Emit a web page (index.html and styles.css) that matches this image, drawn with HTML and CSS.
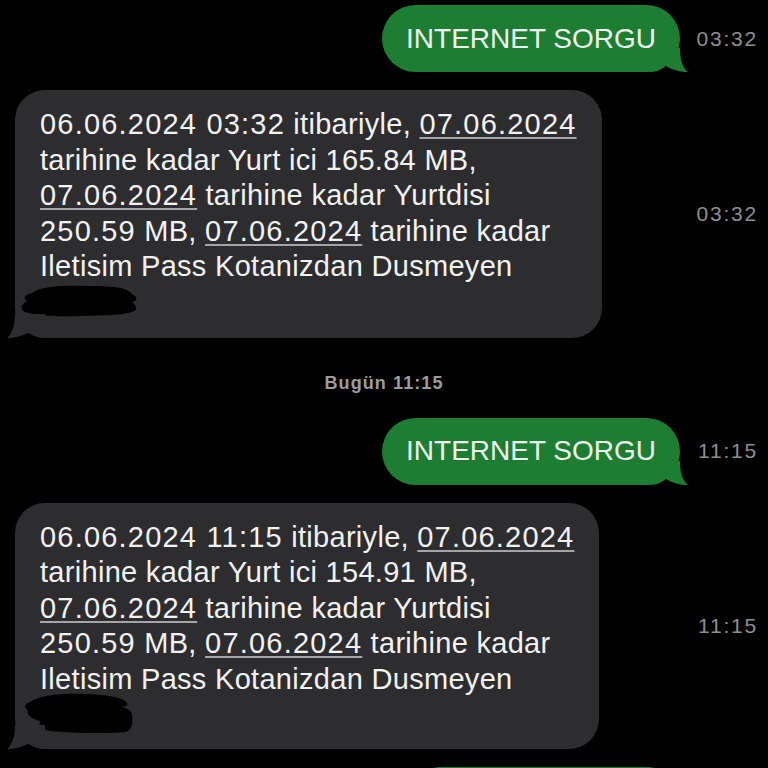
FILE: index.html
```html
<!DOCTYPE html>
<html lang="tr">
<head>
    <meta charset="UTF-8">
    <meta name="viewport" content="width=device-width, initial-scale=1.0">
    <title>Mesajlar</title>
    <link rel="stylesheet" href="styles.css">
</head>
<body>
    <div class="chat">
        <div class="row row-out">
            <div class="bubble bubble-out">
                INTERNET SORGU
                <svg class="tail tail-out" width="40" height="24" viewBox="0 0 40 24"><path d="M0 24 V0 H30 C30 10 32 19 38 24 C31 24.5 22 22 16 18 C12 21 7 24 0 24 Z"/></svg>
            </div>
            <div class="time">03:32</div>
        </div>

        <div class="row row-in">
            <div class="bubble bubble-in">
                <p class="msg"><span class="num">06.06.2024 03:32</span> itibariyle, <u>07.06.2024</u><br>tarihine kadar Yurt ici 165.84 MB,<br><u>07.06.2024</u> tarihine kadar Yurtdisi<br><span class="num">250.59</span> MB, <u>07.06.2024</u> tarihine kadar<br>Iletisim Pass Kotanizdan Dusmeyen</p>
                <svg class="redact" width="120" height="32" viewBox="0 0 120 32"><path d="M12 8 C20 1 45 0 70 1 C95 1 108 3 112 9 C118 12 118 16 112 17 C116 20 119 25 112 27 C100 31 80 30 60 31 C35 32 10 30 3 26 C0 22 2 18 8 16 C2 14 4 10 12 8 Z"/></svg>
                <svg class="tail tail-in" width="40" height="24" viewBox="0 0 40 24"><path d="M0 24 V0 H30 C30 10 32 19 38 24 C31 24.5 22 22 16 18 C12 21 7 24 0 24 Z"/></svg>
            </div>
            <div class="time">03:32</div>
        </div>

        <div class="day">Bugün 11:15</div>

        <div class="row row-out">
            <div class="bubble bubble-out">
                INTERNET SORGU
                <svg class="tail tail-out" width="40" height="24" viewBox="0 0 40 24"><path d="M0 24 V0 H30 C30 10 32 19 38 24 C31 24.5 22 22 16 18 C12 21 7 24 0 24 Z"/></svg>
            </div>
            <div class="time">11:15</div>
        </div>

        <div class="row row-in">
            <div class="bubble bubble-in">
                <p class="msg"><span class="num">06.06.2024 11:15</span> itibariyle, <u>07.06.2024</u><br>tarihine kadar Yurt ici 154.91 MB,<br><u>07.06.2024</u> tarihine kadar Yurtdisi<br><span class="num">250.59</span> MB, <u>07.06.2024</u> tarihine kadar<br>Iletisim Pass Kotanizdan Dusmeyen</p>
                <svg class="redact redact-tall" width="112" height="40" viewBox="0 0 112 40"><path d="M8 9 C18 2 40 0 65 1 C85 2 100 4 104 9 C108 12 104 14 98 13 C104 15 110 17 110 22 C111 30 110 37 104 39 C80 41 50 40 28 38 C20 37 16 33 18 28 C10 26 4 22 6 18 C2 15 2 11 8 9 Z"/></svg>
                <svg class="tail tail-in" width="40" height="24" viewBox="0 0 40 24"><path d="M0 24 V0 H30 C30 10 32 19 38 24 C31 24.5 22 22 16 18 C12 21 7 24 0 24 Z"/></svg>
            </div>
            <div class="time">11:15</div>
        </div>

        <div class="row row-out">
            <div class="bubble bubble-out bubble-next"></div>
            <div class="time"></div>
        </div>
    </div>
</body>
</html>
```

FILE: styles.css
```css
* {
    box-sizing: border-box;
    margin: 0;
    padding: 0;
}
html, body {
    height: 100%;
    overflow: hidden;
}
body {
    background-color: #000;
    color: #f2f2f2;
    font-family: "Liberation Sans", Arial, sans-serif;
}
.chat {
    display: flex;
    flex-direction: column;
    gap: 18px;
    padding-top: 5px;
}
.row {
    display: flex;
    align-items: center;
}
.row-out {
    justify-content: flex-end;
}
.row-in {
    justify-content: space-between;
    padding-left: 15px;
}
.bubble {
    position: relative;
}
.bubble-out {
    background-color: #1d7d32;
    color: #eef7ee;
    height: 67px;
    padding: 0 24px;
    border-radius: 34px;
    font-size: 28px;
    display: flex;
    align-items: center;
}
.bubble-out .tail {
    fill: #1d7d32;
}
.bubble-in {
    background-color: #2d2d2f;
    border-radius: 30px;
    padding: 17px 25px 21px 25px;
}
.bubble-in .tail {
    fill: #2d2d2f;
}
.bubble-next {
    width: 272px;
}
.msg {
    font-size: 29px;
    line-height: 35.5px;
    letter-spacing: 0.3px;
    white-space: nowrap;
}
.msg u,
.msg .num {
    letter-spacing: 1.2px;
}
.msg u {
    text-decoration-color: #a5a5a7;
    text-decoration-thickness: 1.5px;
    text-underline-offset: 3px;
}
.redact {
    display: block;
    margin-left: -20px;
    fill: #000;
}
.redact-tall {
    margin-left: -18px;
    margin-top: -4px;
    margin-bottom: -5px;
}
.tail {
    position: absolute;
    bottom: 0;
}
.tail-out {
    right: -10px;
}
.tail-in {
    left: -10px;
    transform: scaleX(-1);
}
.time {
    width: 88px;
    padding-right: 10px;
    text-align: right;
    color: #8e8e93;
    font-size: 21px;
    letter-spacing: 1.8px;
}
.day {
    height: 44px;
    padding-top: 12px;
    display: flex;
    align-items: center;
    justify-content: center;
    color: #9c9ca1;
    font-size: 18px;
    font-weight: 600;
    letter-spacing: 1.1px;
}
```
